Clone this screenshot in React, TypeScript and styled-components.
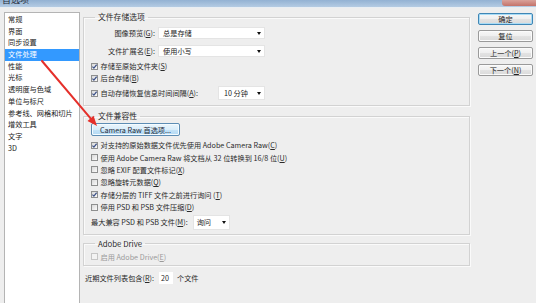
import React from "react";
import styled, { createGlobalStyle } from "styled-components";

const GlobalStyle = createGlobalStyle`
  html, body { margin: 0; padding: 0; background: #eeeeee; }
  body { font-family: "Noto Sans CJK SC", "Noto Sans", sans-serif; }
  * { box-sizing: border-box; }
`;

const Window = styled.div`
  position: relative;
  width: 536px;
  height: 303px;
  overflow: hidden;
  background: #eeeeee;
  color: #2a2a2a;
  font-size: 7.2px;
  display: flex;
  flex-direction: column;
`;

const TitleBar = styled.div`
  height: 8px;
  flex: none;
  display: flex;
  overflow: hidden;
  background: linear-gradient(#93b2d3, #b4cbe3);
  border-bottom: 1px solid #e9eef3;
`;

const TitleText = styled.span`
  margin: -5px 0 0 2px;
  font-size: 9px;
  line-height: 10px;
  color: #1e2a38;
`;

const CloseBox = styled.div`
  margin-left: auto;
  width: 34px;
  height: 6px;
  background: linear-gradient(#d9a29b, #c4736a);
  border-bottom-left-radius: 3px;
`;

const Body = styled.div`
  flex: 1;
  display: flex;
  align-items: flex-start;
  padding: 4px 0 0 4px;
  min-height: 0;
`;

const Sidebar = styled.ul`
  list-style: none;
  margin: 0;
  padding: 1px 0 0;
  width: 76px;
  height: 300px;
  background: #fff;
  border: 1px solid #b4b4b4;
  flex: none;
`;

const SideItem = styled.li<{ $active?: boolean }>`
  height: 11.7px;
  line-height: 11.7px;
  padding-left: 3px;
  white-space: nowrap;
  background: ${(p) => (p.$active ? "#3399ff" : "transparent")};
  color: ${(p) => (p.$active ? "#fff" : "#222")};
`;

const Main = styled.div`
  margin-left: 3px;
  width: 387px;
  flex: none;
  display: flex;
  flex-direction: column;
`;

const Group = styled.fieldset<{ $mt?: number; $pt: number; $pb: number }>`
  margin: ${(p) => p.$mt ?? 0}px 0 0;
  padding: ${(p) => p.$pt}px 7px ${(p) => p.$pb}px;
  border: 1px solid #d2d2d2;
  box-shadow: inset 1px 1px 0 #fafafa, 1px 1px 0 #fafafa;
  min-width: 0;
  display: flex;
  flex-direction: column;
`;

const Legend = styled.legend`
  margin-left: 4px;
  padding: 0 3px;
  font-size: 7.8px;
  line-height: 10px;
  height: 10px;
  color: #2a2a2a;
`;

const Row = styled.div<{ $h: number; $mt?: number; $w?: number }>`
  display: flex;
  align-items: center;
  height: ${(p) => p.$h}px;
  margin-top: ${(p) => p.$mt ?? 0}px;
  width: ${(p) => (p.$w ? `${p.$w}px` : "auto")};
  white-space: nowrap;
  line-height: 10px;
`;

const FieldLabel = styled.span`
  width: 64px;
  text-align: right;
  margin-right: 3px;
`;

const SelectBox = styled.div<{ $w: number; $h?: number; $pl?: number; $ml?: string }>`
  width: ${(p) => p.$w}px;
  height: ${(p) => p.$h ?? 12}px;
  margin-left: ${(p) => p.$ml ?? "0"};
  background: #fff;
  border: 1px solid #e4e4e4;
  display: flex;
  align-items: center;
  padding: 0 3px 0 ${(p) => p.$pl ?? 4}px;
  color: #222;
`;

const Caret = styled.span`
  margin-left: auto;
  width: 0;
  height: 0;
  border-left: 2.5px solid transparent;
  border-right: 2.5px solid transparent;
  border-top: 3px solid #111;
`;

const Box = styled.span<{ $disabled?: boolean }>`
  width: 7px;
  height: 7px;
  flex: none;
  border: 1px solid ${(p) => (p.$disabled ? "#c6c6c6" : "#8e8f8f")};
  background: ${(p) =>
    p.$disabled ? "#f3f3f3" : "linear-gradient(135deg, #d9d9d9, #fbfbfb)"};
  display: flex;
  align-items: center;
  justify-content: center;
  margin-right: 2.5px;
`;

const CheckText = styled.span<{ $disabled?: boolean }>`
  color: ${(p) => (p.$disabled ? "#9a9a9a" : "#2a2a2a")};
`;

const ActionButton = styled.button`
  width: 89px;
  height: 13px;
  padding: 0;
  font: inherit;
  font-size: 7.2px;
  line-height: 10px;
  color: #1f2a36;
  border: 1px solid #5d8db4;
  border-radius: 2px;
  background: linear-gradient(#eaf5fc 0%, #d9edfa 50%, #c4e3f8 51%, #b3d9f3 100%);
  box-shadow: inset 0 0 0 1px #f4fbff;
`;

const BottomRow = styled.div`
  display: flex;
  align-items: center;
  height: 12px;
  margin-top: 6px;
  padding-left: 2px;
  white-space: nowrap;
  line-height: 10px;
`;

const NumInput = styled.div`
  width: 14px;
  height: 12px;
  margin: 0 4px 0 5px;
  background: #fff;
  display: flex;
  align-items: center;
  padding-left: 2px;
`;

const ButtonCol = styled.div`
  margin-left: 8px;
  width: 55px;
  flex: none;
  padding-top: 1px;
  display: flex;
  flex-direction: column;
  gap: 5px;
`;

const DlgButton = styled.button<{ $default?: boolean }>`
  height: 12px;
  padding: 0;
  font: inherit;
  font-size: 7.2px;
  line-height: 10px;
  color: #222;
  border: 1px solid ${(p) => (p.$default ? "#3f86b5" : "#9a9a9a")};
  border-radius: 2px;
  background: linear-gradient(#f7f7f7 0%, #efefef 50%, #e3e3e3 51%, #dadada 100%);
  box-shadow: inset 0 0 0 1px ${(p) => (p.$default ? "#a9dcf6" : "#fbfbfb")};
`;

const ArrowOverlay = styled.svg`
  position: absolute;
  left: 0;
  top: 0;
  width: 536px;
  height: 303px;
  pointer-events: none;
`;

const CheckMark = () => (
  <svg width="5" height="5" viewBox="0 0 5 5">
    <polyline points="0.4,2.6 1.9,4.1 4.6,0.7" fill="none" stroke="#3a4f86" strokeWidth="1.2" />
  </svg>
);

const Check: React.FC<{ checked?: boolean; disabled?: boolean; children: React.ReactNode }> = ({
  checked,
  disabled,
  children,
}) => (
  <>
    <Box $disabled={disabled}>{checked && <CheckMark />}</Box>
    <CheckText $disabled={disabled}>{children}</CheckText>
  </>
);

const sideItems = [
  "常规",
  "界面",
  "同步设置",
  "文件处理",
  "性能",
  "光标",
  "透明度与色域",
  "单位与标尺",
  "参考线、网格和切片",
  "增效工具",
  "文字",
  "3D",
];

export default function App() {
  return (
    <Window>
      <GlobalStyle />
      <TitleBar>
        <TitleText>首选项</TitleText>
        <CloseBox />
      </TitleBar>
      <Body>
        <Sidebar>
          {sideItems.map((s) => (
            <SideItem key={s} $active={s === "文件处理"}>
              {s}
            </SideItem>
          ))}
        </Sidebar>
        <Main>
          <Group $pt={5} $pb={5}>
            <Legend>文件存储选项</Legend>
            <Row $h={12}>
              <FieldLabel>
                图像预览(<u>G</u>):
              </FieldLabel>
              <SelectBox $w={107}>
                总是存储
                <Caret />
              </SelectBox>
            </Row>
            <Row $h={12} $mt={6}>
              <FieldLabel>
                文件扩展名(<u>E</u>):
              </FieldLabel>
              <SelectBox $w={107}>
                使用小写
                <Caret />
              </SelectBox>
            </Row>
            <Row $h={12} $mt={3}>
              <Check checked>
                存储至原始文件夹(<u>S</u>)
              </Check>
            </Row>
            <Row $h={12}>
              <Check checked>
                后台存储(<u>B</u>)
              </Check>
            </Row>
            <Row $h={14} $mt={2} $w={174}>
              <Check checked>
                自动存储恢复信息时间间隔(<u>A</u>):
              </Check>
              <SelectBox $w={47} $h={14} $pl={5} $ml="auto">
                10 分钟
                <Caret />
              </SelectBox>
            </Row>
          </Group>

          <Group $mt={5} $pt={2} $pb={4}>
            <Legend>文件兼容性</Legend>
            <ActionButton>Camera Raw 首选项...</ActionButton>
            <Row $h={12.4} $mt={3}>
              <Check checked>
                对支持的原始数据文件优先使用 Adobe Camera Raw(<u>C</u>)
              </Check>
            </Row>
            <Row $h={12.4}>
              <Check>
                使用 Adobe Camera Raw 将文档从 32 位转换到 16/8 位(<u>U</u>)
              </Check>
            </Row>
            <Row $h={12.4}>
              <Check>
                忽略 EXIF 配置文件标记(<u>X</u>)
              </Check>
            </Row>
            <Row $h={12.4}>
              <Check>
                忽略旋转元数据(<u>Q</u>)
              </Check>
            </Row>
            <Row $h={12.4}>
              <Check checked>
                存储分层的 TIFF 文件之前进行询问 (<u>T</u>)
              </Check>
            </Row>
            <Row $h={12.4}>
              <Check>
                停用 PSD 和 PSB 文件压缩(<u>D</u>)
              </Check>
            </Row>
            <Row $h={15} $mt={1.6}>
              <span>
                最大兼容 PSD 和 PSB 文件(<u>M</u>):
              </span>
              <SelectBox $w={37} $h={15} $pl={3} $ml="5px">
                询问
                <Caret />
              </SelectBox>
            </Row>
          </Group>

          <Group $mt={4} $pt={2} $pb={2}>
            <Legend>Adobe Drive</Legend>
            <Row $h={12}>
              <Check disabled>
                启用 Adobe Drive(<u>E</u>)
              </Check>
            </Row>
          </Group>

          <BottomRow>
            近期文件列表包含(<u>R</u>):
            <NumInput>20</NumInput>
            个文件
          </BottomRow>
        </Main>
        <ButtonCol>
          <DlgButton $default>确定</DlgButton>
          <DlgButton>复位</DlgButton>
          <DlgButton>
            上一个(<u>P</u>)
          </DlgButton>
          <DlgButton>
            下一个(<u>N</u>)
          </DlgButton>
        </ButtonCol>
      </Body>
      <ArrowOverlay viewBox="0 0 536 303">
        <line x1="42" y1="61" x2="91" y2="118.8" stroke="#e5302b" strokeWidth="2" strokeLinecap="round" />
        <polygon points="97,126 87.5,121 93.6,115.8" fill="#e5302b" />
      </ArrowOverlay>
    </Window>
  );
}
